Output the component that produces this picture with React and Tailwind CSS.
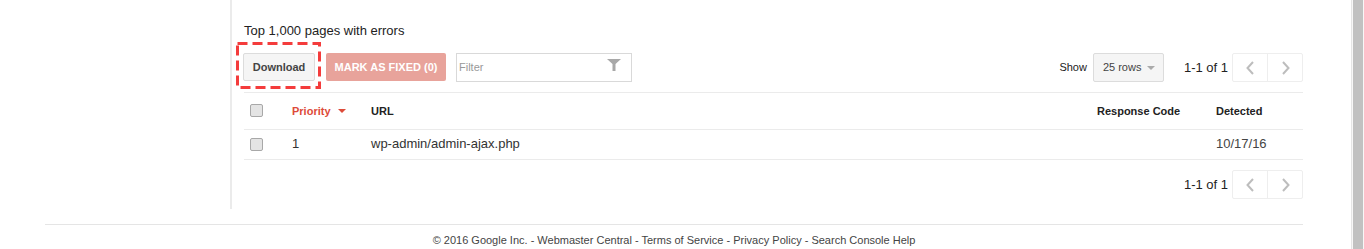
import React from "react";

const Checkbox = () => (
  <span className="block w-[13px] h-[13px] rounded-[2px] border border-[#a8a8a8] bg-[#e4e4e4]" />
);

const Pager = () => (
  <div className="flex items-center justify-end">
    <span className="text-[13px] text-[#222] mr-[4px]">1-1 of 1</span>
    <div className="flex h-[29px] border border-[#eeeeee] rounded-[2px]">
      <button className="w-[35px] flex items-center justify-center border-r border-[#eeeeee]">
        <svg width="9" height="14" viewBox="0 0 9 14">
          <polyline points="7,1 1.5,7 7,13" fill="none" stroke="#bdbdbd" strokeWidth="2" />
        </svg>
      </button>
      <button className="w-[34px] flex items-center justify-center">
        <svg width="9" height="14" viewBox="0 0 9 14">
          <polyline points="2,1 7.5,7 2,13" fill="none" stroke="#bdbdbd" strokeWidth="2" />
        </svg>
      </button>
    </div>
  </div>
);

export default function App() {
  return (
    <div
      className="flex w-[1364px] h-[249px] overflow-hidden bg-white"
      style={{ fontFamily: '"Liberation Sans", Arial, sans-serif' }}
    >
      <div className="flex-1 flex flex-col">
        <div className="flex">
          <div className="w-[230px]" />
          <div className="w-[1073px] h-[209px] border-l-2 border-[#ebebeb] pl-[12px] pt-[23px]">
            <h2 className="text-[13px] leading-[16px] text-[#222]">Top 1,000 pages with errors</h2>

            {/* toolbar */}
            <div className="flex items-start mt-[14px] h-[29px]">
              <div className="relative -ml-[1px]">
                <button className="h-[28px] w-[72px] bg-[#f5f5f5] border border-[#dcdcdc] rounded-[2px] text-[11px] font-bold text-[#444]">
                  Download
                </button>
                <svg
                  className="absolute left-[-7px] top-[-11px]"
                  width="85"
                  height="47"
                  viewBox="0 0 85 47"
                >
                  <rect x="1.5" y="1.5" width="82" height="44" fill="none" stroke="#f43c3c" strokeWidth="3" strokeDasharray="10 5" />
                </svg>
              </div>
              <button className="ml-[11px] h-[28px] w-[120px] bg-[#e8a39b] rounded-[2px] text-[11px] font-bold text-white">
                MARK AS FIXED (0)
              </button>
              <div className="ml-[10px] w-[176px] h-[29px] border border-[#d9d9d9] flex items-center justify-between pl-[2px] pr-[10px]">
                <span className="text-[11px] text-[#999] -mt-[1px]">Filter</span>
                <svg width="14" height="12" viewBox="0 0 14 12" className="-mt-[6px]">
                  <path d="M0 0 H14 L8.5 5 V12 H5.5 V5 Z" fill="#a8a8a8" />
                </svg>
              </div>

              <div className="ml-auto flex items-center">
                <span className="text-[11px] text-[#222] mr-[6px]">Show</span>
                <div className="h-[29px] w-[71px] bg-[#f5f5f5] border border-[#dcdcdc] rounded-[2px] flex items-center pl-[9px]">
                  <span className="text-[11px] text-[#444]">25 rows</span>
                  <span className="ml-[6px] w-0 h-0 border-l-[4px] border-r-[4px] border-t-[4px] border-l-transparent border-r-transparent border-t-[#aaa]" />
                </div>
                <div className="ml-[20px]">
                  <Pager />
                </div>
              </div>
            </div>

            {/* table */}
            <div className="mt-[10px] border-t border-[#ebebeb]">
              <div className="grid grid-cols-[48px_79px_1fr_119px_87px] items-center h-[37px] border-b border-[#ebebeb] text-[11px] font-bold text-[#222]">
                <div className="pl-[6px] -mt-[2px]"><Checkbox /></div>
                <div className="flex items-center text-[#dd4b39]">
                  Priority
                  <span className="ml-[7px] w-0 h-0 border-l-[4px] border-r-[4px] border-t-[4px] border-l-transparent border-r-transparent border-t-[#dd4b39]" />
                </div>
                <div>URL</div>
                <div>Response Code</div>
                <div>Detected</div>
              </div>
              <div className="grid grid-cols-[48px_79px_1fr_119px_87px] items-center h-[30px] border-b border-[#ebebeb] text-[13px] text-[#333]">
                <div className="pl-[6px]"><Checkbox /></div>
                <div className="-mt-[2px]">1</div>
                <div className="-mt-[2px]">wp-admin/admin-ajax.php</div>
                <div></div>
                <div className="-mt-[2px] text-[#444]">10/17/16</div>
              </div>
            </div>

            <div className="mt-[10px]">
              <Pager />
            </div>
          </div>
        </div>

        <footer className="ml-[45px] w-[1258px] mt-[15px] border-t border-[#e5e5e5] pt-[7px] text-center text-[11px] text-[#444]">
          © 2016 Google Inc. - Webmaster Central - Terms of Service - Privacy Policy - Search Console Help
        </footer>
      </div>

      {/* scrollbar */}
      <div className="w-[13px] h-full border-l border-[#e5e5e5] bg-[#f7f7f7] pl-[1px] pr-[1px]">
        <div className="h-full bg-[#c1c1c1]" />
      </div>
    </div>
  );
}
